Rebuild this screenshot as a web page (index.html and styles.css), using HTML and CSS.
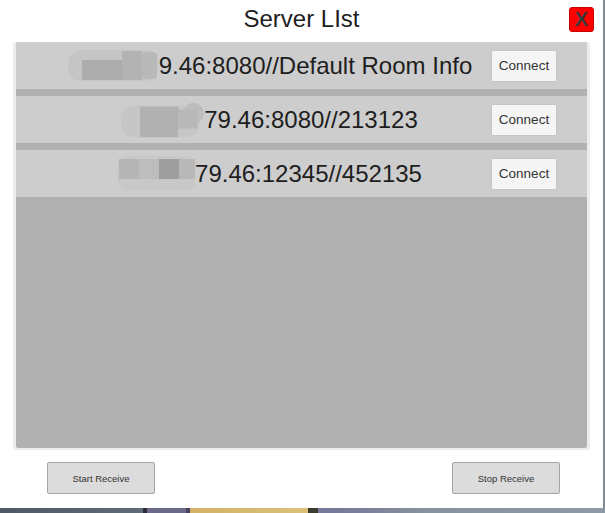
FILE: index.html
```html
<!DOCTYPE html>
<html lang="en">
<head>
<meta charset="utf-8">
<title>Server LIst</title>
<link rel="stylesheet" href="styles.css">
</head>
<body>
<div class="screen">
  <div class="main">
    <div class="window">
      <header class="header">
        <span></span>
        <h1 class="title">Server LIst</h1>
        <button class="close">X</button>
      </header>
      <div class="panel">
        <div class="list">
          <div class="row">
            <div class="label">
              <svg class="blob" width="92" height="31" viewBox="0 0 92 31" aria-hidden="true">
                <rect x="1" y="0" width="90" height="31" rx="13" fill="#c5c5c5"/>
                <rect x="15" y="10" width="60" height="20" fill="#adadad"/>
                <rect x="55" y="1" width="20" height="29" fill="#b3b3b3"/>
                <rect x="75" y="2" width="15" height="27" rx="4" fill="#b9b9b9"/>
              </svg><span class="addr">9.46:8080//Default Room Info</span>
            </div>
            <button class="connect">Connect</button>
          </div>
          <div class="row">
            <div class="label">
              <svg class="blob b2" width="83" height="37" viewBox="0 0 87 37" aria-hidden="true">
                <rect x="0" y="4" width="82" height="33" rx="13" fill="#c6c6c6"/>
                <circle cx="76" cy="12" r="11" fill="#bdbdbd"/>
                <rect x="20" y="5" width="40" height="32" fill="#b1b1b1"/>
                <rect x="60" y="8" width="20" height="20" fill="#b8b8b8"/>
              </svg><span class="addr">79.46:8080//213123</span>
            </div>
            <button class="connect">Connect</button>
          </div>
          <div class="row">
            <div class="label">
              <svg class="blob" width="78" height="35" viewBox="0 0 78 35" aria-hidden="true">
                <rect x="0" y="0" width="80" height="35" rx="13" fill="#c8c8c8"/>
                <rect x="2" y="3" width="20" height="20" fill="#b5b5b5"/>
                <rect x="22" y="3" width="20" height="20" fill="#bdbdbd"/>
                <rect x="42" y="3" width="20" height="20" fill="#9e9e9e"/>
                <rect x="62" y="3" width="16" height="20" fill="#b9b9b9"/>
              </svg><span class="addr">79.46:12345//452135</span>
            </div>
            <button class="connect">Connect</button>
          </div>
        </div>
      </div>
      <div class="actions">
        <button class="action">Start Receive</button>
        <button class="action">Stop Receive</button>
      </div>
    </div>
    <div class="edge"></div>
  </div>
  <div class="strip"></div>
</div>
</body>
</html>
```

FILE: styles.css
```css
html, body {
  margin: 0;
  padding: 0;
}

body {
  width: 605px;
  height: 513px;
  overflow: hidden;
  font-family: "Liberation Sans", Arial, sans-serif;
  background: #ffffff;
}

.screen {
  display: flex;
  flex-direction: column;
  width: 605px;
  height: 513px;
}

.main {
  display: flex;
  height: 508px;
}

.window {
  flex: 1;
  display: flex;
  flex-direction: column;
  background: #ffffff;
}

.edge {
  width: 2px;
  background: #7f8a94;
}

.strip {
  height: 5px;
  background: linear-gradient(to right,
    #4e5965 0, #5f6b75 143px,
    #2b2b3d 143px, #2b2b3d 147px,
    #6b6a8b 147px, #6b6a8b 186px,
    #4a4060 186px, #4a4060 190px,
    #d2b266 190px, #dcc07a 308px,
    #3a3c2e 308px, #3a3c2e 318px,
    #77779a 318px, #7a7d9a 355px,
    #86929d 420px, #8d99a3 605px);
}

.header {
  height: 42px;
  display: grid;
  grid-template-columns: 1fr auto 1fr;
  align-items: start;
}

.title {
  margin: 5px 0 0;
  font-size: 24px;
  line-height: 28px;
  font-weight: normal;
  color: #1e1e1e;
}

.close {
  justify-self: end;
  margin: 7px 9px 0 0;
  width: 25px;
  height: 25px;
  padding: 0;
  border: 1px solid #c80000;
  border-radius: 3px;
  background: #ff0000;
  color: #3a3a3a;
  font-family: "Liberation Sans", Arial, sans-serif;
  font-weight: bold;
  font-size: 20px;
  line-height: 23px;
  text-align: center;
}

.panel {
  margin: 0 13px;
  height: 408px;
  box-sizing: border-box;
  border-left: 3px solid #ececec;
  border-right: 3px solid #ececec;
  border-bottom: 2px solid #ececec;
  border-radius: 3px;
  background: #ececec;
}

.list {
  height: 100%;
  display: flex;
  flex-direction: column;
  gap: 7px;
  background: #b1b1b1;
  border-radius: 0 0 2px 2px;
}

.row {
  height: 47px;
  flex: none;
  display: flex;
  align-items: center;
  background: #cdcdcd;
}

.label {
  flex: 1;
  display: flex;
  align-items: center;
  justify-content: center;
  padding-left: 32px;
  white-space: nowrap;
}

.blob {
  display: block;
  flex: none;
}

.b2 {
  overflow: visible;
}

.addr {
  font-size: 24px;
  color: #1e1e1e;
}

.connect {
  flex: none;
  margin-right: 30px;
  width: 66px;
  height: 32px;
  padding: 0;
  box-sizing: border-box;
  border: 1px solid #c6c6c6;
  border-radius: 2px;
  background: #f5f5f5;
  color: #333333;
  font-family: "Liberation Sans", Arial, sans-serif;
  font-size: 13.5px;
}

.actions {
  display: flex;
  justify-content: space-between;
  padding: 12px 43px 0 47px;
}

.action {
  width: 108px;
  height: 32px;
  padding: 0;
  box-sizing: border-box;
  border: 1px solid #a5a5a5;
  border-radius: 2px;
  background: #dcdcdc;
  color: #333333;
  font-family: "Liberation Sans", Arial, sans-serif;
  font-size: 9.5px;
}
```
